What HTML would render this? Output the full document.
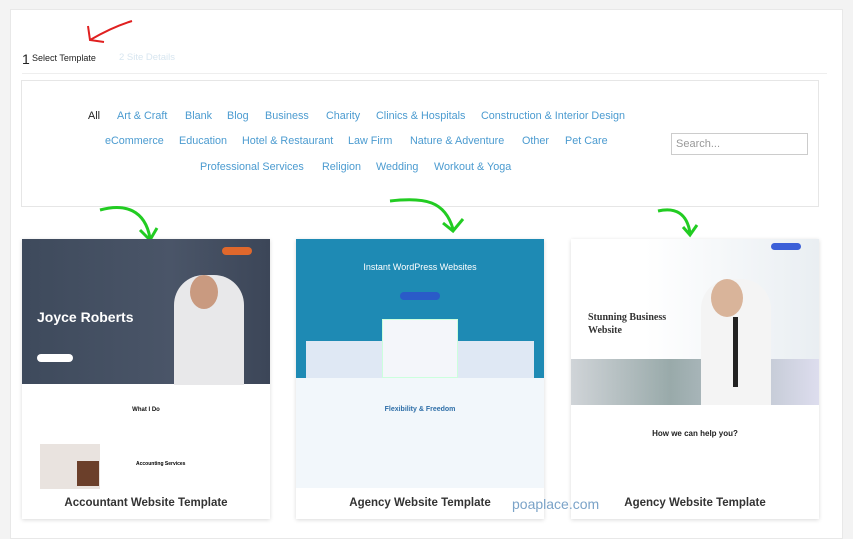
<!DOCTYPE html>
<html><head><meta charset="utf-8"><style>
*{margin:0;padding:0;box-sizing:border-box}
body{width:853px;height:532px;background:#f3f3f3;font-family:"Liberation Sans",sans-serif;position:relative;overflow:hidden}
.panel{position:absolute;left:10px;top:9px;width:833px;height:530px;background:#fff;border:1px solid #e8e8e8}
.abs{position:absolute}
.cat{position:absolute;font-size:10.8px;color:#4b9bd0;white-space:nowrap}
.card{position:absolute;top:239px;width:248px;height:280px;background:#fff;box-shadow:0 1px 4px rgba(0,0,0,.15)}
.title{position:absolute;left:0;right:0;bottom:10px;text-align:center;font-size:11.5px;color:#333;font-weight:bold}
</style></head><body>
<div class="panel"></div>
<div class="abs" style="left:22px;top:51px;font-size:14px;color:#222">1</div>
<div class="abs" style="left:32px;top:53px;font-size:9px;color:#222">Select Template</div>
<div class="abs" style="left:119px;top:52px;font-size:9.5px;color:#d8e6f0">2 Site Details</div>
<div class="abs" style="left:22px;top:73px;width:805px;height:1px;background:#eee"></div>
<svg class="abs" style="left:82px;top:18px" width="55" height="30"><path d="M50 3 C40 6 25 12 8 22 M6 8 L8 22 L22 24" stroke="#e02020" stroke-width="2" fill="none"/></svg>
<div class="abs" style="left:21px;top:80px;width:798px;height:127px;border:1px solid #e6e6e6"></div>
<div class="cat" style="left:88px;top:110px;color:#222">All</div>
<div class="cat" style="left:117px;top:110px">Art &amp; Craft</div>
<div class="cat" style="left:185px;top:110px">Blank</div>
<div class="cat" style="left:227px;top:110px">Blog</div>
<div class="cat" style="left:265px;top:110px">Business</div>
<div class="cat" style="left:326px;top:110px">Charity</div>
<div class="cat" style="left:376px;top:110px">Clinics &amp; Hospitals</div>
<div class="cat" style="left:481px;top:110px">Construction &amp; Interior Design</div>
<div class="cat" style="left:105px;top:135px">eCommerce</div>
<div class="cat" style="left:179px;top:135px">Education</div>
<div class="cat" style="left:242px;top:135px">Hotel &amp; Restaurant</div>
<div class="cat" style="left:348px;top:135px">Law Firm</div>
<div class="cat" style="left:410px;top:135px">Nature &amp; Adventure</div>
<div class="cat" style="left:522px;top:135px">Other</div>
<div class="cat" style="left:565px;top:135px">Pet Care</div>
<div class="cat" style="left:200px;top:161px">Professional Services</div>
<div class="cat" style="left:322px;top:161px">Religion</div>
<div class="cat" style="left:376px;top:161px">Wedding</div>
<div class="cat" style="left:434px;top:161px">Workout &amp; Yoga</div>
<div class="abs" style="left:671px;top:133px;width:137px;height:22px;border:1px solid #ccc;font-size:11px;color:#999;padding:4px 4px">Search...</div>
<svg class="abs" style="left:95px;top:200px" width="70" height="45"><path d="M5 10 C30 3 50 10 55 38 M45 30 L55 40 L62 28" stroke="#2c2" stroke-width="3" fill="none"/></svg>
<svg class="abs" style="left:385px;top:195px" width="90" height="45"><path d="M5 6 C40 2 60 6 68 34 M58 28 L68 36 L78 24" stroke="#2c2" stroke-width="3" fill="none"/></svg>
<svg class="abs" style="left:655px;top:205px" width="50" height="35"><path d="M3 6 C20 2 32 8 35 28 M28 22 L35 30 L42 20" stroke="#2c2" stroke-width="3" fill="none"/></svg>

<div class="card" style="left:22px">
 <div class="abs" style="left:0;top:0;width:248px;height:145px;background:linear-gradient(90deg,#3e4a5c,#4a5568 60%,#3c4658)"></div>
 <div class="abs" style="left:200px;top:8px;width:30px;height:8px;background:#e0682c;border-radius:4px"></div>
 <div class="abs" style="left:152px;top:36px;width:70px;height:110px;background:#e8e8ea;border-radius:30px 30px 0 0"></div>
 <div class="abs" style="left:168px;top:36px;width:28px;height:34px;background:#c99a80;border-radius:50%"></div>
 <div class="abs" style="left:15px;top:70px;font-size:14px;font-weight:bold;color:#fff">Joyce Roberts</div>
 <div class="abs" style="left:15px;top:115px;width:36px;height:8px;border-radius:4px;background:#fff"></div>
 <div class="abs" style="left:0;top:168px;width:248px;text-align:center;font-size:6px;font-weight:bold;color:#111">What I Do</div>
 <div class="abs" style="left:18px;top:205px;width:60px;height:45px;background:#e9e3df"></div>
 <div class="abs" style="left:55px;top:222px;width:22px;height:25px;background:#6b3f2a"></div>
 <div class="abs" style="left:114px;top:222px;font-size:5px;font-weight:bold">Accounting Services</div>
 <div class="title">Accountant Website Template</div>
</div>
<div class="card" style="left:296px">
 <div class="abs" style="left:0;top:0;width:248px;height:139px;background:#1e8ab4"></div>
 <div class="abs" style="left:0;top:23px;width:248px;text-align:center;font-size:9px;color:#fff">Instant WordPress Websites</div>
 <div class="abs" style="left:104px;top:53px;width:40px;height:8px;border-radius:4px;background:#2a5bc8"></div>
 <div class="abs" style="left:10px;top:102px;width:228px;height:37px;background:#dfe8f4"></div>
 <div class="abs" style="left:86px;top:80px;width:76px;height:59px;background:#f4f6fa;border:1px solid #cfd"></div>
 <div class="abs" style="left:0;top:139px;width:248px;height:110px;background:#f2f7fb"></div>
 <div class="abs" style="left:0;top:167px;width:248px;text-align:center;font-size:7px;font-weight:bold;color:#2f6fa8">Flexibility &amp; Freedom</div>
 <div class="title">Agency Website Template</div>
</div>
<div class="card" style="left:571px">
 <div class="abs" style="left:0;top:0;width:248px;height:166px;background:linear-gradient(90deg,#fff 30%,#e9eef2)"></div>
 <div class="abs" style="left:0;top:120px;width:248px;height:46px;background:linear-gradient(90deg,#d0d4d8,#9aa 40%,#dde)"></div>
 <div class="abs" style="left:130px;top:40px;width:70px;height:126px;background:#f4f4f4;border-radius:30px 30px 0 0"></div>
 <div class="abs" style="left:140px;top:40px;width:32px;height:38px;background:#d9b49a;border-radius:50%"></div>
 <div class="abs" style="left:162px;top:78px;width:5px;height:70px;background:#222"></div>
 <div class="abs" style="left:200px;top:4px;width:30px;height:7px;border-radius:4px;background:#3b5fd8"></div>
 <div class="abs" style="left:17px;top:72px;font-size:10px;font-family:'Liberation Serif',serif;font-weight:bold;color:#333;line-height:13px">Stunning Business<br>Website</div>
 <div class="abs" style="left:0;top:190px;width:248px;text-align:center;font-size:8px;font-weight:bold;color:#222">How we can help you?</div>
 <div class="title">Agency Website Template</div>
</div>
<div class="abs" style="left:512px;top:496px;font-size:14px;color:#7ba3c8">poaplace.com</div>
</body></html>
